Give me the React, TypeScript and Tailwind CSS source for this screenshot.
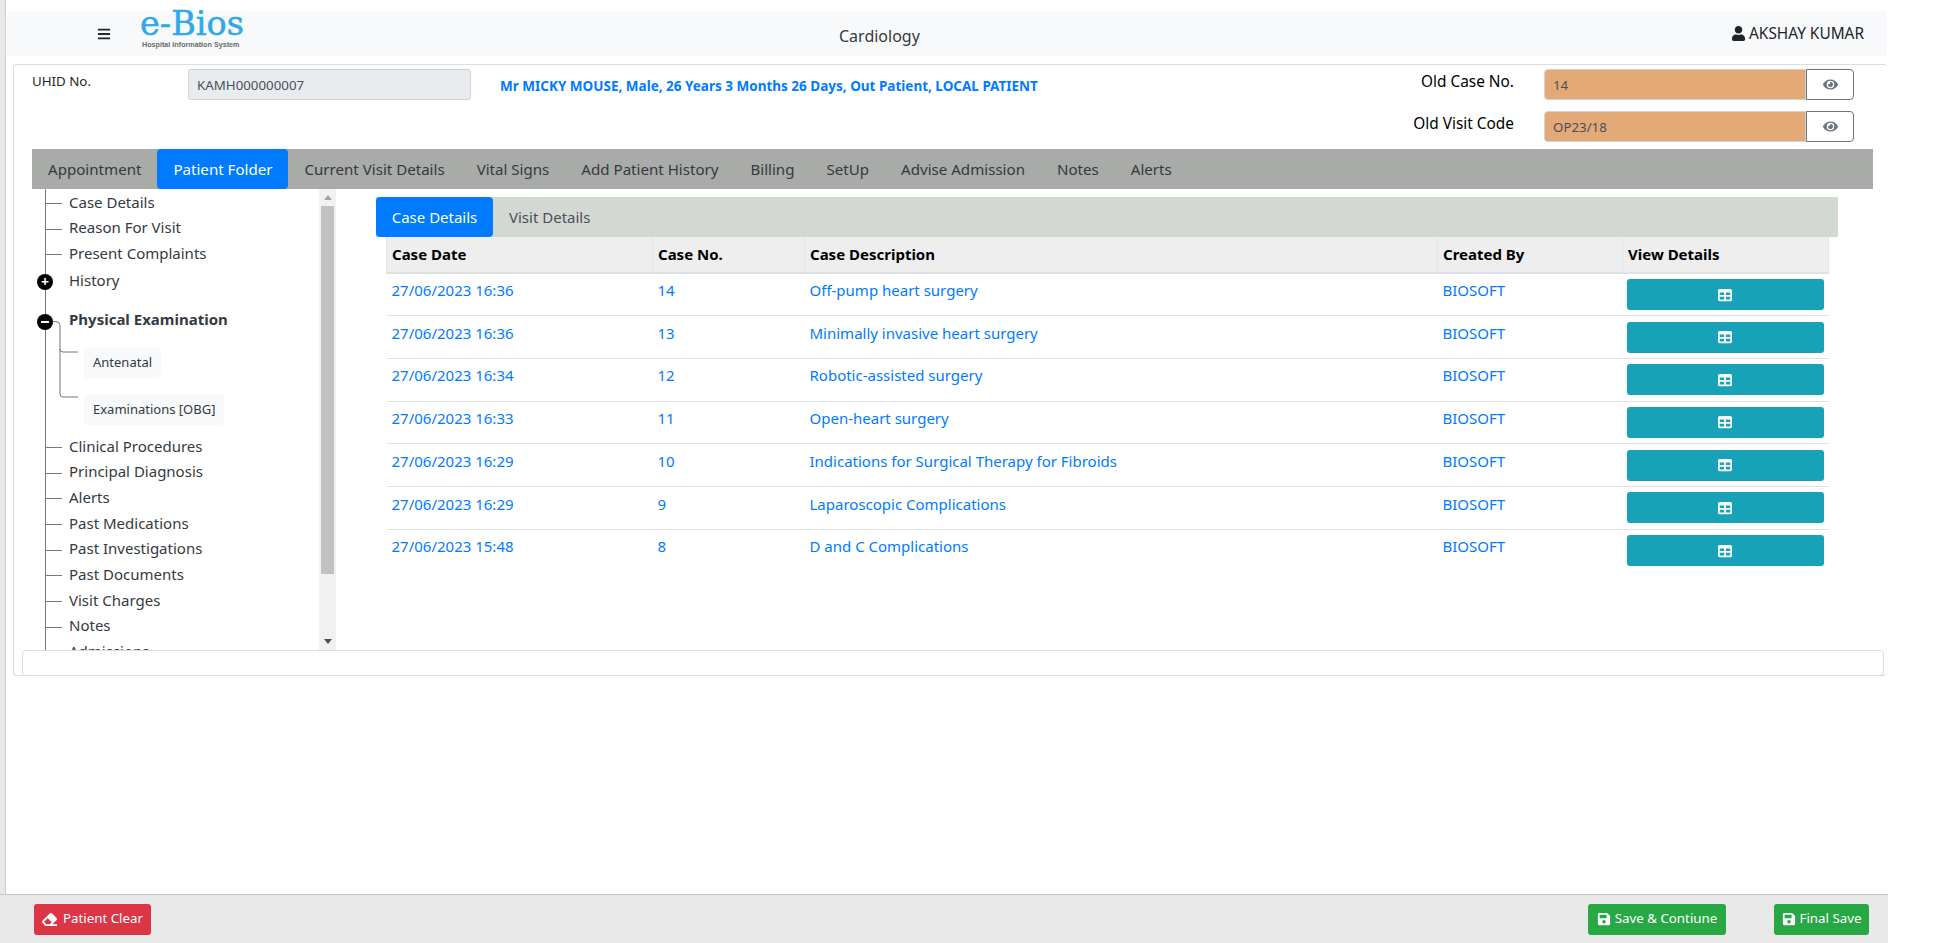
import React from 'react';
import { FaBars, FaEraser, FaEye, FaSave, FaUser } from 'react-icons/fa';
import { FaTable } from 'react-icons/fa6';

const topTabs = ['Appointment', 'Patient Folder', 'Current Visit Details', 'Vital Signs', 'Add Patient History', 'Billing', 'SetUp', 'Advise Admission', 'Notes', 'Alerts'];

const cases = [
  { date: '27/06/2023 16:36', no: '14', desc: 'Off-pump heart surgery' },
  { date: '27/06/2023 16:36', no: '13', desc: 'Minimally invasive heart surgery' },
  { date: '27/06/2023 16:34', no: '12', desc: 'Robotic-assisted surgery' },
  { date: '27/06/2023 16:33', no: '11', desc: 'Open-heart surgery' },
  { date: '27/06/2023 16:29', no: '10', desc: 'Indications for Surgical Therapy for Fibroids' },
  { date: '27/06/2023 16:29', no: '9', desc: 'Laparoscopic Complications' },
  { date: '27/06/2023 15:48', no: '8', desc: 'D and C Complications' },
];

const TreeRow: React.FC<{ label: string }> = ({ label }) => (
  <div className="flex h-[25.7px] items-center">
    <span className="mt-[3px] h-px w-[16px] shrink-0 bg-[#777]" />
    <span className="ml-[7px] whitespace-nowrap">{label}</span>
  </div>
);

const CodeField: React.FC<{ label: string; value: string }> = ({ label, value }) => (
  <div className="flex h-[31px] items-center">
    <label className="mb-[6px] mr-[30px] text-[15.4px] text-black">{label}</label>
    <div className="flex h-[31px] w-[310px]">
      <input readOnly value={value} className="h-full w-[262px] rounded-l-[4px] border border-[#ced4da] bg-[#e3a977] px-[8px] text-[13.3px] text-[#495057] outline-none" />
      <button className="flex h-full w-[48px] items-center justify-center rounded-r-[4px] border border-[#6c757d] bg-white text-[#6c757d]">
        <FaEye className="text-[15px]" />
      </button>
    </div>
  </div>
);

export default function App() {
  return (
    <div className="flex h-[943px] w-[1941px] flex-col overflow-hidden bg-white text-[15px] text-[#212529]" style={{ fontFamily: '"Noto Sans", "Open Sans", sans-serif' }}>
      <div className="flex min-h-0 flex-1">
        <div className="w-[6px] shrink-0 border-r border-[#cfcfcf] bg-[#e8e8e8]" />
        <div className="w-[1881px] pt-[11px]">
          {/* top bar */}
          <header className="relative ml-[1px] flex h-[45px] items-center bg-[#f8f9fa]">
            <FaBars className="ml-[90px] text-[14px] text-[#212529]" />
            <div className="mb-[8px] ml-[29px] flex flex-col items-start">
              <span className="text-[33.5px] leading-[26px] text-[#2ea9e6] [-webkit-text-stroke:0.5px_#2ea9e6]" style={{ fontFamily: '"DejaVu Serif", serif' }}>e-Bios</span>
              <span className="mt-[4px] whitespace-nowrap pl-[2px] text-[7.2px] font-bold leading-[8px] text-[#6b6b6b]" style={{ fontFamily: '"Liberation Sans", sans-serif' }}>Hospital Information System</span>
            </div>
            <span className="absolute left-[832px] top-[13px] text-[16px] text-[#343a40]">Cardiology</span>
            <div className="ml-auto mr-[23px] flex items-center gap-[3px] text-[15.4px]">
              <FaUser className="text-[15px]" />
              AKSHAY KUMAR
            </div>
          </header>

          {/* patient card */}
          <section className="ml-[7px] mt-[8px] h-[612px] rounded-[4px] border border-r-0 border-[#dcdcdc]">
            <div className="flex h-[84px] items-start pl-[18px] pr-[33px] pt-[4px]">
              <label className="mt-[3px] w-[156px] text-[13.3px]">UHID No.</label>
              <input readOnly value="KAMH000000007" className="h-[31px] w-[283px] rounded-[3px] border border-[#ced4da] bg-[#e9ecef] px-[8px] text-[13.3px] text-[#495057] outline-none" />
              <p className="ml-[29px] mt-[7px] text-[13.5px] font-bold text-[#007bff]">Mr MICKY MOUSE, Male, 26 Years 3 Months 26 Days, Out Patient, LOCAL PATIENT</p>
              <div className="ml-auto flex flex-col items-end gap-[11px]">
                <CodeField label="Old Case No." value="14" />
                <CodeField label="Old Visit Code" value="OP23/18" />
              </div>
            </div>

            {/* main tabs */}
            <nav className="ml-[18px] flex h-[40px] w-[1841px] bg-[#a9aba8] text-[15.1px]">
              {topTabs.map((tab) => (
                <button key={tab} className={tab === 'Patient Folder' ? 'rounded-[4px] bg-[#007bff] px-[16px] text-white' : 'px-[16px] text-[#343a40]'}>
                  {tab}
                </button>
              ))}
            </nav>

            <div className="ml-[18px] flex h-[461px]">
              {/* case tree */}
              <aside className="flex h-full w-[304px] shrink-0 overflow-hidden">
                <div className="relative ml-[13px] h-[480px] w-[274px] border-l border-[#777] text-[#343a40]">
                  <TreeRow label="Case Details" />
                  <TreeRow label="Reason For Visit" />
                  <TreeRow label="Present Complaints" />
                  <div className="relative flex h-[28px] items-center pl-[23px]">
                    History
                    <span className="absolute left-[-9px] top-[8px] flex h-[16px] w-[16px] items-center justify-center rounded-full bg-black text-[14px] font-bold leading-none text-white">+</span>
                  </div>
                  <div className="relative mt-[12px] flex h-[26px] items-center pl-[23px] font-bold">
                    Physical Examination
                    <span className="absolute left-[-9px] top-[8px] flex h-[16px] w-[16px] items-center justify-center rounded-full bg-black">
                      <span className="h-[2px] w-[8px] bg-white" />
                    </span>
                  </div>
                  <div className="relative ml-[38px] mt-[15px] flex flex-col items-start gap-[16px] text-[13px]">
                    <svg className="absolute left-[-33px] top-[-26px]" width="32" height="82" fill="none" stroke="#777">
                      <path d="M2 .5h3a4 4 0 0 1 4 4V28a3 3 0 0 0 3 3h15M9 28v45a3 3 0 0 0 3 3h15" />
                    </svg>
                    <span className="flex h-[31px] items-center rounded-[4px] bg-[#f8f9fa] px-[9px]">Antenatal</span>
                    <span className="flex h-[31px] items-center rounded-[4px] bg-[#f8f9fa] px-[9px]">Examinations [OBG]</span>
                  </div>
                  <div className="mt-[8px]">
                    <TreeRow label="Clinical Procedures" />
                    <TreeRow label="Principal Diagnosis" />
                    <TreeRow label="Alerts" />
                    <TreeRow label="Past Medications" />
                    <TreeRow label="Past Investigations" />
                    <TreeRow label="Past Documents" />
                    <TreeRow label="Visit Charges" />
                    <TreeRow label="Notes" />
                    <TreeRow label="Admissions" />
                  </div>
                </div>
                <div className="flex h-full w-[17px] shrink-0 flex-col items-center bg-[#f1f1f1]">
                  <span className="mt-[6px] h-0 w-0 border-x-[4px] border-b-[5px] border-x-transparent border-b-[#a3a3a3]" />
                  <span className="mt-[6px] h-[368px] w-[13px] bg-[#c1c1c1]" />
                  <span className="mt-auto mb-[6px] h-0 w-0 border-x-[4px] border-t-[5px] border-x-transparent border-t-[#505050]" />
                </div>
              </aside>

              {/* case list */}
              <div className="ml-[40px] w-[1462px] pt-[8px]">
                <div className="flex h-[40px] bg-[#d4d8d2]">
                  <button className="w-[117px] rounded-[4px] bg-[#007bff] text-white">Case Details</button>
                  <button className="px-[16px] text-[#495057]">Visit Details</button>
                </div>
                <table className="ml-[10px] w-[1442px] table-fixed border-collapse">
                  <colgroup>
                    <col className="w-[266px]" />
                    <col className="w-[152px]" />
                    <col className="w-[633px]" />
                    <col className="w-[185px]" />
                    <col className="w-[206px]" />
                  </colgroup>
                  <thead>
                    <tr className="h-[36px] border-b-2 border-[#dee2e6] bg-[#eeeeee] text-left font-bold text-black">
                      {['Case Date', 'Case No.', 'Case Description', 'Created By', 'View Details'].map((h) => (
                        <th key={h} className="border-x border-[#e2e5e8] px-[5px] font-bold">{h}</th>
                      ))}
                    </tr>
                  </thead>
                  <tbody className="text-[#007bff]">
                    {cases.map((c, i) => (
                      <tr key={c.no} className={i < cases.length - 1 ? 'h-[42.7px] border-b border-[#dee2e6]' : 'h-[42.7px]'}>
                        <td className="px-[5px] pb-[8px]">{c.date}</td>
                        <td className="px-[5px] pb-[8px]">{c.no}</td>
                        <td className="px-[5px] pb-[8px]">{c.desc}</td>
                        <td className="px-[5px] pb-[8px]">BIOSOFT</td>
                        <td className="px-[4px]">
                          <button className="flex h-[31px] w-[197px] items-center justify-center rounded-[3px] bg-[#17a2b8] text-white">
                            <FaTable className="text-[14px]" />
                          </button>
                        </td>
                      </tr>
                    ))}
                  </tbody>
                </table>
              </div>
            </div>
            <div className="ml-[8px] h-[26px] w-[1862px] rounded-[4px] border border-[#dcdcdc]" />
          </section>
        </div>
      </div>

      {/* action bar */}
      <footer className="flex h-[49px] w-[1888px] items-center border-t border-[#c8c8c8] bg-[#e9e9e9] pl-[34px] pr-[19px] text-[13.3px] text-white">
        <button className="flex h-[31px] w-[117px] items-center justify-center gap-[6px] rounded-[3px] bg-[#dc3545]">
          <FaEraser className="text-[15px]" />
          Patient Clear
        </button>
        <button className="ml-auto flex h-[31px] w-[138px] items-center justify-center gap-[4px] rounded-[3px] bg-[#28a745]">
          <FaSave className="text-[14px]" />
          Save &amp; Contiune
        </button>
        <button className="ml-[48px] flex h-[31px] w-[95px] items-center justify-center gap-[4px] rounded-[3px] bg-[#28a745]">
          <FaSave className="text-[14px]" />
          Final Save
        </button>
      </footer>
    </div>
  );
}
